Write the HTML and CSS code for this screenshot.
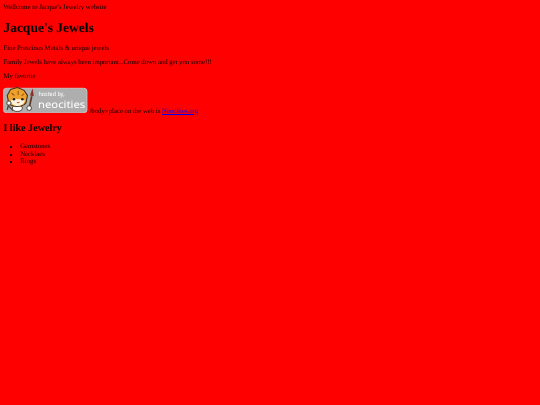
FILE: index.html
```
<!DOCTYPE html>
<html lang="en">
<head>
<meta charset="utf-8">
<title>Jacque's Jewels</title>
<link rel="stylesheet" href="styles.css">
</head>
<body>
Wellcome to Jacque's Jewelry website
<h1>Jacque's Jewels</h1>
<p>Fine Prescious Metals &amp; unique jewels</p>
<p class="tight">Family Jewels have always been important...Come down and get you some!!!</p>
<p class="before-badge">My favorite</p>
<svg class="badge" viewBox="0 0 200 62" role="img" aria-label="hosted by neocities">
<rect x="1" y="3" width="198" height="58" rx="7" fill="#aeaeae" stroke="#c8c8c8" stroke-width="2"/>
<path d="M14 38 L10 54 M14 46 L24 56" stroke="#4a4038" stroke-width="3" fill="none"/>
<path d="M62 50 L68 22" stroke="#5a3a24" stroke-width="4" fill="none"/>
<path d="M64 20 L70 3 L73 22 Z" fill="#8a2f2a"/>
<ellipse cx="34" cy="50" rx="12" ry="8" fill="#fff" stroke="#3c3024" stroke-width="2"/>
<path d="M10 20 L18 6 L34 1 L50 8 L58 20 L56 30 C56 42 44 46 33 46 C20 46 12 40 12 30 Z" fill="#eda22f" stroke="#4a3018" stroke-width="2.5"/>
<path d="M18 32 C24 28 44 28 52 32 C50 41 41 45 34 45 C26 45 20 40 18 32 Z" fill="#fff3dc"/>
<circle cx="26" cy="29" r="3" fill="#222"/><circle cx="46" cy="29" r="3" fill="#222"/>
<path d="M32 36 Q36 41 40 36 Z" fill="#b83020"/>
<path d="M20 14 L27 20 M36 9 L36 19 M50 16 L44 21" stroke="#a85f14" stroke-width="3"/>
<circle cx="62" cy="50" r="5.5" fill="#fff" stroke="#3c3024" stroke-width="2"/>
<circle cx="14" cy="38" r="5" fill="#fff" stroke="#3c3024" stroke-width="2"/>
<text x="84" y="21" class="badge-small" textLength="62" lengthAdjust="spacingAndGlyphs">hosted by,</text>
<text x="83" y="50" class="badge-large" textLength="112" lengthAdjust="spacingAndGlyphs">neocities</text>
</svg> /body&gt;place on the web is <a href="#">Neocities.org</a>
<h2>I like Jewelry</h2>
<ul>
<li>Gemstones</li>
<li>Necklaes</li>
<li>Rings</li>
</ul>
</body>
</html>
```
FILE: styles.css
```
html {
  background: #ff0000;
}
body {
  margin: 4.2px 3.375px 3.375px;
  font-family: "Liberation Serif", serif;
  font-size: 6.75px;
  line-height: 7.6px;
  color: #000;
  text-rendering: geometricPrecision;
  filter: blur(0.35px);
}
h1 { font-size: 13.5px; line-height: 15.6px; margin: 8.2px 0 9px; }
h2 { font-size: 10.125px; line-height: 11.8px; margin: 7.4px 0 8.4px; }
p { margin: 6.75px 0; }
.before-badge { margin-bottom: 5.75px; }
ul { margin: 6.75px 0; padding-left: 16.875px; }
.tight { letter-spacing: -0.02px; }
a { color: #0000ee; }
.badge { width: 84.4px; height: 26.2px; }
.badge-small { font: 14px "Noto Sans", sans-serif; fill: #fff; }
.badge-large { font: 24px "Noto Sans", sans-serif; fill: #fff; }
```
